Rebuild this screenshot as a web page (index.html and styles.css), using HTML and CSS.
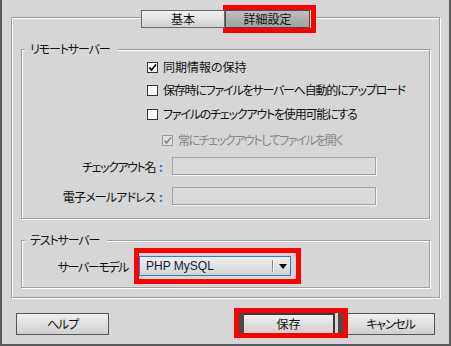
FILE: index.html
```html
<!DOCTYPE html>
<html lang="ja">
<head>
  <meta charset="UTF-8">
  <meta name="viewport" content="width=device-width, initial-scale=1.0">
  <title>サイト設定</title>
  <link rel="stylesheet" href="styles.css">
</head>
<body>
  <div class="dialog">
    <div class="tabs">
      <div class="tab">基本</div>
      <div class="tab active">詳細設定</div>
    </div>

    <div class="panel">
      <div class="group remote">
        <div class="group-title">リモートサーバー</div>
        <div class="options">
          <label class="check row1"><span class="box"><svg viewBox="0 0 9 9"><path d="M1.5 4.5 L3.5 7 L8 1.5" /></svg></span>同期情報の保持</label>
          <label class="check row2"><span class="box"></span>保存時にファイルをサーバーへ自動的にアップロード</label>
          <label class="check row3"><span class="box"></span>ファイルのチェックアウトを使用可能にする</label>
          <label class="check row4 disabled"><span class="box"><svg viewBox="0 0 9 9"><path d="M1.5 4.5 L3.5 7 L8 1.5" /></svg></span>常にチェックアウトしてファイルを開く</label>
        </div>
        <div class="field field1">
          <span class="field-label"><span class="name-checkout">チェックアウト名</span><span class="colon">:</span></span>
          <span class="input"></span>
        </div>
        <div class="field field2">
          <span class="field-label"><span class="name-mail">電子メールアドレス</span><span class="colon">:</span></span>
          <span class="input"></span>
        </div>
      </div>

      <div class="group test">
        <div class="group-title">テストサーバー</div>
        <div class="model">
          <span class="model-label">サーバーモデル</span>
          <div class="select">
            <span class="select-text">PHP MySQL</span>
            <span class="select-arrow"></span>
          </div>
        </div>
      </div>
    </div>

    <div class="buttons">
      <div class="btn help">ヘルプ</div>
      <div class="btn save">保存</div>
      <div class="btn cancel">キャンセル</div>
    </div>

    <!-- 赤枠の注釈 -->
    <div class="mark mark-tab"></div>
    <div class="mark mark-select"></div>
    <div class="mark mark-save"></div>
  </div>
</body>
</html>
```

FILE: styles.css
```css
:root {
  --bg: #d6d6d6;
  --etch-dark: #a0a0a0;
  --etch-light: #ffffff;
  --text: #111111;
  --disabled: #858585;
  --red: #ff0000;
}
body {
  margin: 0;
  font-family: "Noto Sans CJK JP", "Noto Sans", sans-serif;
  font-size: 12px;
  font-feature-settings: "palt";
  color: var(--text);
}
.dialog {
  position: relative;
  width: 451px;
  height: 346px;
  box-sizing: border-box;
  padding: 10px 9px 0 9px;
  background: var(--bg);
  border: 2px solid #5a5a5a;
  border-top: 0;
}
/* タブ */
.tabs {
  position: relative;
  z-index: 1;
  display: flex;
  justify-content: center;
  height: 18px;
}
.tab {
  box-sizing: border-box;
  width: 84px;
  height: 18px;
  line-height: 16px;
  text-align: center;
  border: 1px solid #6a6a6a;
  background: linear-gradient(to bottom, #f2f2f2, #d2d2d2);
}
.tab.active {
  width: 85px;
  border-color: #4a4a4a;
  background: linear-gradient(to bottom, #bdbdbd, #a2a2a2);
}
/* パネル */
.panel {
  margin-top: -11px;
  padding: 31px 9px 9px 9px;
  border: 1px solid var(--etch-dark);
  box-shadow: inset 1px 1px 0 var(--etch-light), 1px 1px 0 var(--etch-light);
}
.group {
  border: 1px solid var(--etch-dark);
  box-shadow: inset 1px 1px 0 var(--etch-light), 1px 1px 0 var(--etch-light);
}
.group.remote {
  padding-bottom: 13px;
}
.group.test {
  margin-top: 21px;
  padding-bottom: 11px;
}
.group-title {
  width: fit-content;
  margin: -9px 0 0 3px;
  padding: 0 8px 0 5px;
  line-height: 16px;
  letter-spacing: -1.1px;
  background: var(--bg);
}
/* チェックボックス */
.options {
  padding-left: 125px;
}
.check {
  display: flex;
  align-items: center;
  gap: 5px;
  height: 16px;
  line-height: 16px;
  white-space: nowrap;
}
.row1 { margin-top: 2px; }
.row2 { margin-top: 7px; letter-spacing: -1.2px; }
.row3 { margin-top: 8px; letter-spacing: -1.2px; }
.row4 { margin-top: 10px; margin-left: 15px; letter-spacing: -1.4px; }
.box {
  flex-shrink: 0;
  box-sizing: border-box;
  width: 11px;
  height: 11px;
  border: 1px solid #333;
  background: #fff;
  display: flex;
}
.box svg {
  width: 9px;
  height: 9px;
  fill: none;
  stroke: #000;
  stroke-width: 1.8;
}
.check.disabled {
  color: var(--disabled);
}
.check.disabled .box {
  border-color: #9a9a9a;
  background: #e2e2e2;
}
.check.disabled .box svg {
  stroke: #8a8a8a;
}
/* 入力欄 */
.field {
  display: flex;
  align-items: center;
  height: 18px;
}
.field1 { margin-top: 9px; }
.field2 { margin-top: 12px; }
.field-label {
  width: 141px;
  text-align: right;
  white-space: nowrap;
}
.name-checkout { letter-spacing: -1.4px; }
.name-mail { letter-spacing: -0.8px; }
.colon {
  color: #1e6fb8;
  font-weight: bold;
  margin-left: 4px;
}
.input {
  box-sizing: border-box;
  width: 204px;
  height: 18px;
  margin-left: 9px;
  border: 1px solid #a2a2a2;
  background: #d9d9d9;
  box-shadow: 1px 1px 0 #f4f4f4;
}
/* サーバーモデル */
.model {
  display: flex;
  align-items: center;
  margin-top: 8px;
  height: 20px;
}
.model-label {
  width: 106px;
  text-align: right;
  white-space: nowrap;
  letter-spacing: -1.4px;
}
.select {
  box-sizing: border-box;
  display: flex;
  align-items: center;
  width: 152px;
  height: 20px;
  margin-left: 11px;
  border: 1px solid #2a7bd0;
  background: linear-gradient(to bottom, #efefef, #d3d3d3);
}
.select-text {
  flex: 1;
  padding-left: 6px;
  font-family: "Liberation Sans", "Noto Sans", sans-serif;
  font-size: 12px;
  color: #15153a;
}
.select-arrow {
  position: relative;
  width: 17px;
  height: 12px;
  border-left: 1px solid #8a8a8a;
  box-shadow: inset 1px 0 0 #fff;
}
.select-arrow::after {
  content: "";
  position: absolute;
  left: 6px;
  top: 4px;
  border-left: 4px solid transparent;
  border-right: 4px solid transparent;
  border-top: 5px solid #000;
}
/* ボタン */
.buttons {
  display: flex;
  margin-top: 15px;
  padding: 0 5px;
}
.btn {
  box-sizing: border-box;
  height: 22px;
  line-height: 20px;
  text-align: center;
  white-space: nowrap;
  border: 1px solid #555;
  background: linear-gradient(to bottom, #efefef, #d0d0d0);
}
.btn.help { width: 93px; letter-spacing: -1px; }
.btn.save {
  width: 93px;
  margin-left: auto;
  border: 2px solid #3a3a3a;
  line-height: 18px;
}
.btn.cancel {
  width: 89px;
  margin-left: 11px;
  letter-spacing: -1.2px;
}
/* 注釈の赤枠 */
.mark {
  position: absolute;
  box-sizing: border-box;
  border: 5px solid var(--red);
}
.mark-tab {
  left: 221px;
  top: 5px;
  width: 93px;
  height: 28px;
}
.mark-select {
  left: 132px;
  top: 248px;
  width: 167px;
  height: 36px;
}
.mark-save {
  left: 232px;
  top: 308px;
  width: 114px;
  height: 30px;
  box-shadow: inset 5px 0 0 #4a4a4a, inset -5px 0 0 #4a4a4a;
}
```
